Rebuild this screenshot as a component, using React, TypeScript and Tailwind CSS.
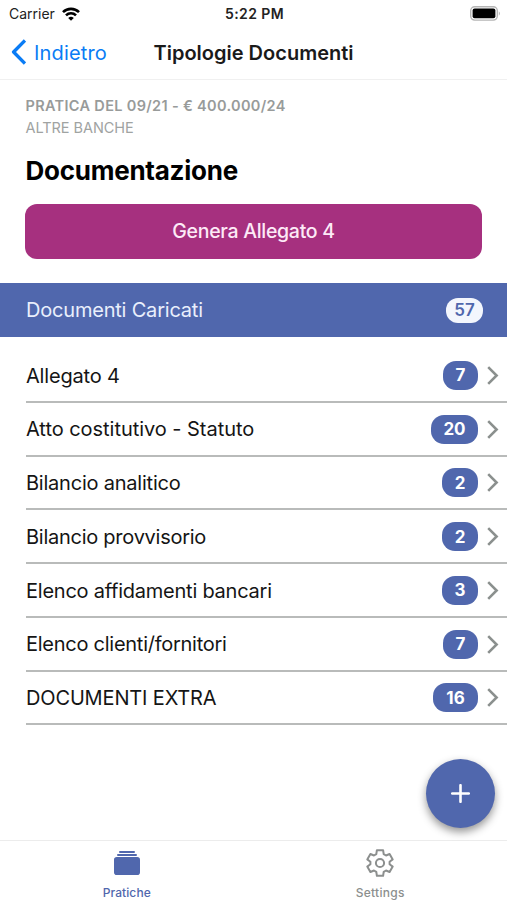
import React from 'react';
import { IoAlbums } from 'react-icons/io5';

interface IDocumentType {
    name: string;
    count: number;
    nameClass: string;
    badgeClass: string;
}

const documentTypes: IDocumentType[] = [
    { name: 'Allegato 4', count: 7, nameClass: 'tracking-[-0.18px]', badgeClass: 'w-[35px]' },
    { name: 'Atto costitutivo - Statuto', count: 20, nameClass: 'tracking-[-0.04px]', badgeClass: 'w-[47px]' },
    { name: 'Bilancio analitico', count: 2, nameClass: 'tracking-[-0.22px]', badgeClass: 'w-[36px]' },
    { name: 'Bilancio provvisorio', count: 2, nameClass: 'tracking-[-0.26px]', badgeClass: 'w-[36px]' },
    { name: 'Elenco affidamenti bancari', count: 3, nameClass: 'tracking-[-0.24px]', badgeClass: 'w-[36px]' },
    { name: 'Elenco clienti/fornitori', count: 7, nameClass: 'tracking-[-0.26px]', badgeClass: 'w-[35px]' },
    { name: 'DOCUMENTI EXTRA', count: 16, nameClass: 'tracking-[-0.15px]', badgeClass: 'w-[45px]' },
];

const StatusBar = () => (
    <div className="grid h-[27px] grid-cols-3 items-center pr-[6px] pl-[9px] text-[14px] leading-none text-[#222]">
        <div className="flex items-center gap-[7px]">
            <span>Carrier</span>
            <svg width="18" height="14" viewBox="0 0 18 14" fill="none" stroke="#000" strokeWidth="2.6">
                <path d="M1 5.2a11.3 11.3 0 0 1 16 0" />
                <path d="M4 8.4a7 7 0 0 1 10 0" />
                <path d="M9 13.8 6.2 11a4 4 0 0 1 5.6 0z" fill="#000" stroke="none" />
            </svg>
        </div>
        <span className="-ml-[1px] text-center font-semibold tracking-[0.4px] whitespace-nowrap">5:22 PM</span>
        <svg className="justify-self-end" width="31" height="15" viewBox="0 0 31 15">
            <rect x="0.7" y="0.7" width="26.6" height="13.4" rx="4" fill="#fff" stroke="#b5b5b5" strokeWidth="1.4" />
            <rect x="2.6" y="2.6" width="22.8" height="9.6" rx="2" fill="#000" />
            <path d="M28.8 5.2a3 3 0 0 1 0 4.6z" fill="#b5b5b5" />
        </svg>
    </div>
);

const Header = () => (
    <header className="relative flex h-[53px] items-center justify-center border-b border-[#f0f0f0]">
        <button className="absolute top-[12px] left-[11px] flex items-center gap-[8px] text-[20px] leading-none text-[#0a7cf5]">
            <svg width="15" height="26" viewBox="0 0 15 26" fill="none" stroke="currentColor" strokeWidth="3.4">
                <path d="M14 1.4 2.6 13 14 24.6" strokeLinejoin="round" />
            </svg>
            <span className="pt-[2px] tracking-[0.15px]">Indietro</span>
        </button>
        <h1 className="text-[20px] leading-none font-semibold text-[#1a1a1a]">Tipologie Documenti</h1>
    </header>
);

const GearIcon = () => (
    <svg width="32" height="32" viewBox="-16 -16 32 32" fill="none" stroke="currentColor" strokeWidth="2" strokeLinejoin="round">
        <path d="M-3.1-12.8H3.1L3.7-8.9 6-7.5 9.6-9 12.7-3.6 9.6-1.3V1.3L12.7 3.6 9.6 9 6 7.5 3.7 8.9 3.1 12.8H-3.1L-3.7 8.9-6 7.5-9.6 9-12.7 3.6-9.6 1.3V-1.3L-12.7-3.6-9.6-9-6-7.5-3.7-8.9z" />
        <circle r="4.1" />
    </svg>
);

const DocumentRow = ({ item }: { item: IDocumentType }) => (
    <li className="ml-[26px] flex h-[53.75px] items-center border-b-2 border-[#b9bbba] pr-[8px]">
        <span className={`flex-1 pt-[1.5px] text-[20px] leading-none whitespace-nowrap ${item.nameClass}`}>{item.name}</span>
        <span className={`mt-[1px] flex h-[29px] items-center justify-center rounded-[13px] bg-[#5067ad] pt-[1px] text-[17px] leading-none font-bold text-white ${item.badgeClass}`}>
            {item.count}
        </span>
        <svg className="mt-[1px] ml-[9px]" width="12" height="19" viewBox="0 0 12 19" fill="none" stroke="#8b908e" strokeWidth="2.6">
            <path d="M1.2 1.2 9.6 9.5l-8.4 8.3" />
        </svg>
    </li>
);

const App = () => {
    return (
        <div className="flex h-[900px] w-[507px] flex-col overflow-hidden bg-white font-['Inter',sans-serif] text-[#151515]">
            <StatusBar />
            <Header />

            <main className="relative flex-1">
                <section className="px-[25px]">
                    <p className="pt-[17px] pl-[0.5px] text-[14.5px] leading-[17px] font-semibold tracking-[0.33px] text-[#989b9a]">
                        <span className="whitespace-nowrap">PRATICA DEL 09/21 - € 400.000/24</span>
                    </p>
                    <p className="mt-[5px] pl-[0.5px] text-[14.5px] leading-[17px] tracking-[-0.05px] text-[#a0a3a2]">
                        <span className="whitespace-nowrap">ALTRE BANCHE</span>
                    </p>
                    <h2 className="mt-[20px] pl-[0.5px] text-[26px] leading-[30px] font-bold tracking-[-0.25px] text-black">
                        <span className="whitespace-nowrap">Documentazione</span>
                    </h2>
                    <button className="mt-[18px] flex h-[55px] w-full items-center justify-center rounded-[12px] bg-[#a6307f] text-[19.5px] font-medium tracking-[-0.3px] text-[#fdeaf7]">
                        <span>Genera Allegato 4</span>
                    </button>
                </section>

                <div className="mt-[24px] flex h-[54px] items-center justify-between bg-[#5067ad] pr-[24px] pl-[26px] text-[20px] text-[#e9effc]">
                    <span className="tracking-[-0.2px]">Documenti Caricati</span>
                    <span className="flex h-[25px] w-[37px] items-center justify-center rounded-[12px] bg-[#f3f6fd] text-[17px] leading-none font-semibold text-[#5067ad]">
                        57
                    </span>
                </div>

                <ul className="mt-[12px]">
                    {documentTypes.map((item) => (
                        <DocumentRow key={item.name} item={item} />
                    ))}
                </ul>

                <button className="absolute right-[12px] bottom-[12px] flex size-[69px] items-center justify-center rounded-full bg-[#5067ad] shadow-[0_4px_9px_rgba(0,0,0,0.42)]">
                    <svg width="19" height="19" viewBox="0 0 19 19" stroke="#fff" strokeWidth="2.6" strokeLinecap="round">
                        <path d="M9.5 1.2v16.6M1.2 9.5h16.6" />
                    </svg>
                </button>
            </main>

            <nav className="grid h-[60px] grid-cols-2 border-t border-[#ececec] text-[12px] leading-none font-medium">
                <a className="flex flex-col items-center pt-[6px] text-[#5067ad]">
                    <IoAlbums size={32} />
                    <span className="mt-[8px] tracking-[0.1px]">Pratiche</span>
                </a>
                <a className="flex flex-col items-center pt-[6px] text-[#8c8f8e]">
                    <GearIcon />
                    <span className="mt-[8px] tracking-[0.3px]">Settings</span>
                </a>
            </nav>
        </div>
    );
};

export default App;
